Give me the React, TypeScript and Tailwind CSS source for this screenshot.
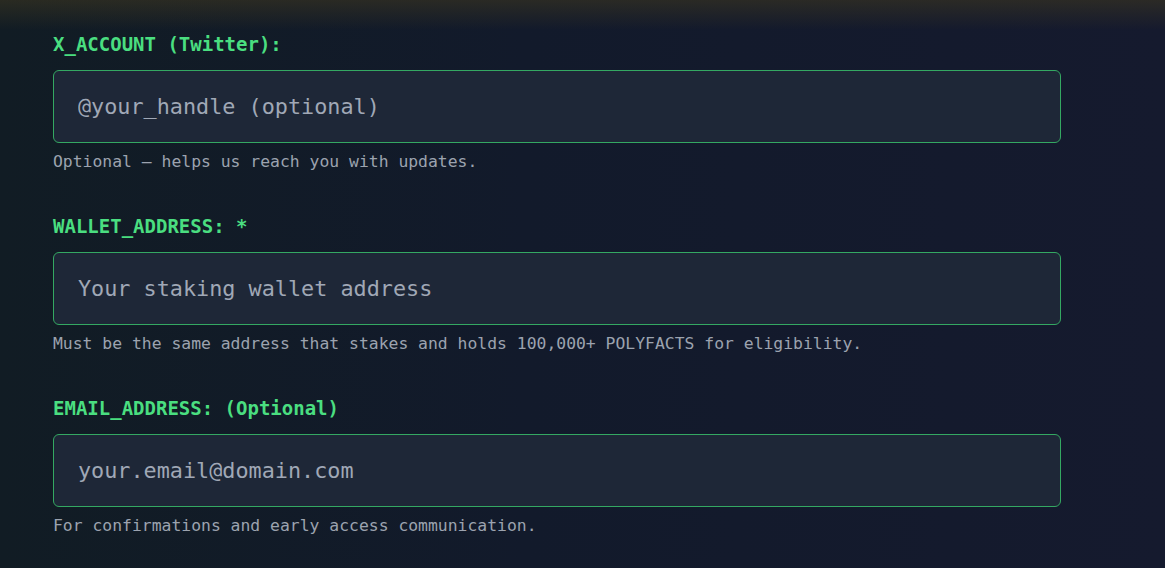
const fields = [
  {
    label: 'X_ACCOUNT (Twitter):',
    placeholder: '@your_handle (optional)',
    help: 'Optional — helps us reach you with updates.',
  },
  {
    label: 'WALLET_ADDRESS: *',
    placeholder: 'Your staking wallet address',
    help: 'Must be the same address that stakes and holds 100,000+ POLYFACTS for eligibility.',
  },
  {
    label: 'EMAIL_ADDRESS: (Optional)',
    placeholder: 'your.email@domain.com',
    help: 'For confirmations and early access communication.',
  },
];

export default function App() {
  return (
    <div
      className="min-h-screen w-full bg-[linear-gradient(to_bottom,rgba(58,52,32,0.6),rgba(20,26,40,0)_30px),linear-gradient(to_right,#111c24,#121a2b_45%,#151a2e)] pl-[53px] pt-[30px]"
      style={{ fontFamily: '"DejaVu Sans Mono", "Liberation Mono", monospace' }}
    >
      <div className="flex w-[1008px] flex-col gap-[38px]">
        {fields.map((f) => (
          <div key={f.label} className="flex flex-col">
            <label className="mb-[12px] text-[19px] font-bold leading-[28px] text-[#4ade80]">{f.label}</label>
            <input
              type="text"
              placeholder={f.placeholder}
              className="h-[73px] w-full rounded-[6px] border border-[#34a862] bg-[#1e2737] px-[24px] text-[21.8px] text-gray-200 outline-none placeholder:text-[#a0a8b6]"
              style={{ fontFamily: 'inherit' }}
            />
            <p className="mt-[7px] text-[16.4px] leading-[24px] text-[#9ca3af]">{f.help}</p>
          </div>
        ))}
      </div>
    </div>
  );
}
